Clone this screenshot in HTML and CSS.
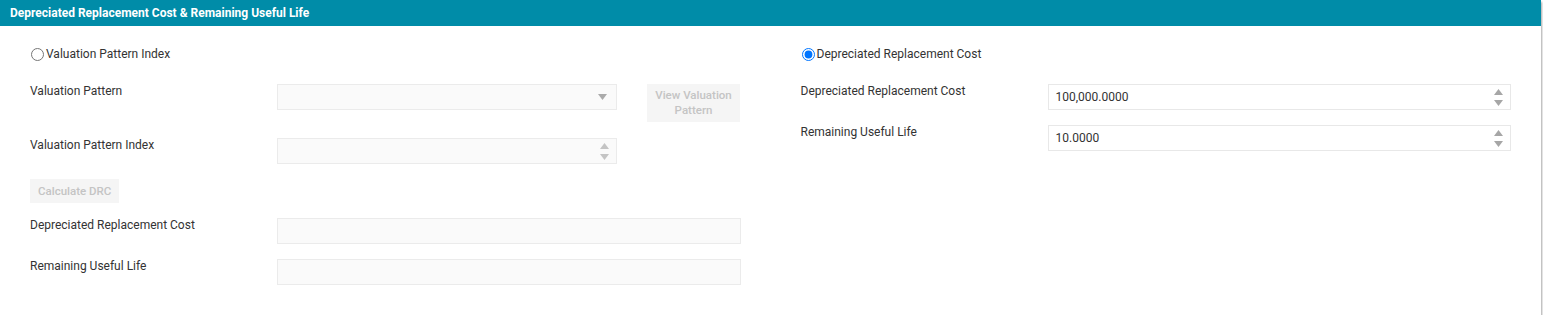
FILE: index.html
```html
<!DOCTYPE html>
<html lang="en">
<head>
	<meta charset="UTF-8">
	<title>Depreciated Replacement Cost</title>
	<link rel="stylesheet" href="styles.css">
</head>
<body>
	<div class="panel">
		<div class="panel-head">Depreciated Replacement Cost &amp; Remaining Useful Life</div>
		<div class="panel-body">
			<!-- 左侧：按估值模式计算 -->
			<div class="col">
				<label class="option"><input type="radio" name="mode"> Valuation Pattern Index</label>

				<div class="field field-tall">
					<span class="label">Valuation Pattern</span>
					<div class="controls">
						<div class="box disabled short">
							<span class="value"></span>
							<svg class="caret" width="9" height="6" viewBox="0 0 9 6"><path d="M0 0h9L4.5 6z"/></svg>
						</div>
						<a href="javascript:;" class="btn btn-tall">View Valuation<br>Pattern</a>
					</div>
				</div>

				<div class="field">
					<span class="label">Valuation Pattern Index</span>
					<div class="controls">
						<div class="box disabled short">
							<span class="value"></span>
							<span class="spin">
								<svg width="9" height="6" viewBox="0 0 9 6"><path d="M4.5 0L9 6H0z"/></svg>
								<svg width="9" height="6" viewBox="0 0 9 6"><path d="M0 0h9L4.5 6z"/></svg>
							</span>
						</div>
					</div>
				</div>

				<div class="action">
					<a href="javascript:;" class="btn">Calculate DRC</a>
				</div>

				<div class="field">
					<span class="label">Depreciated Replacement Cost</span>
					<div class="controls">
						<div class="box disabled"><span class="value"></span></div>
					</div>
				</div>

				<div class="field">
					<span class="label">Remaining Useful Life</span>
					<div class="controls">
						<div class="box disabled"><span class="value"></span></div>
					</div>
				</div>
			</div>

			<!-- 右侧：直接输入 -->
			<div class="col">
				<label class="option"><input type="radio" name="mode" checked> Depreciated Replacement Cost</label>

				<div class="field">
					<span class="label">Depreciated Replacement Cost</span>
					<div class="controls">
						<div class="box">
							<span class="value">100,000.0000</span>
							<span class="spin">
								<svg width="9" height="6" viewBox="0 0 9 6"><path d="M4.5 0L9 6H0z"/></svg>
								<svg width="9" height="6" viewBox="0 0 9 6"><path d="M0 0h9L4.5 6z"/></svg>
							</span>
						</div>
					</div>
				</div>

				<div class="field">
					<span class="label">Remaining Useful Life</span>
					<div class="controls">
						<div class="box">
							<span class="value">10.0000</span>
							<span class="spin">
								<svg width="9" height="6" viewBox="0 0 9 6"><path d="M4.5 0L9 6H0z"/></svg>
								<svg width="9" height="6" viewBox="0 0 9 6"><path d="M0 0h9L4.5 6z"/></svg>
							</span>
						</div>
					</div>
				</div>
			</div>
		</div>
	</div>
</body>
</html>
```

FILE: styles.css
```css
body {
	margin: 0;
	background: #fff;
	font-family: Roboto, "Liberation Sans", Arial, sans-serif;
	font-size: 12px;
	color: #333;
}
.panel {
	width: 1541px;
	background: #fff;
	box-shadow: 1px 2px 2px rgba(0,0,0,.35);
}
.panel-head {
	height: 26px;
	line-height: 26px;
	padding-left: 10px;
	background: #008ca8;
	color: #fff;
	font-weight: bold;
}
.panel-body {
	display: grid;
	grid-template-columns: 1fr 1fr;
	column-gap: 60px;
	padding: 20px 30px 30px;
}
.col {
	display: flex;
	flex-direction: column;
}
.option {
	display: flex;
	align-items: center;
	height: 16px;
	margin-bottom: 22px;
	gap: 2px;
}
.option input {
	margin: 0 0 0 1px;
	width: 13px;
	height: 13px;
}
.field {
	display: flex;
	margin-bottom: 15px;
}
.field-tall {
	margin-bottom: 16px;
}
.field:last-child {
	margin-bottom: 0;
}
.label {
	flex: 0 0 247px;
	line-height: 14px;
}
.controls {
	flex: 1;
	display: flex;
	gap: 30px;
}
.box {
	flex: 1;
	display: flex;
	align-items: center;
	height: 26px;
	box-sizing: border-box;
	border: 1px solid #e8e8e8;
	background: #fff;
	padding: 0 7px 0 7px;
}
.box.short {
	flex: 0 0 340px;
}
.box.disabled {
	background: #fafafa;
	border-color: #ebebeb;
}
.value {
	flex: 1;
	font-size: 12px;
	color: #333;
}
.caret {
	fill: #aaa;
	margin-right: 2px;
}
.spin {
	display: flex;
	flex-direction: column;
	gap: 5px;
}
.spin svg {
	display: block;
	fill: #a6a6a6;
}
.disabled .spin svg {
	fill: #c4c4c4;
}
.btn {
	display: inline-block;
	background: #f5f5f5;
	color: #c4c4c4;
	font-weight: 500;
	font-size: 11.5px;
	text-decoration: none;
	text-align: center;
	line-height: 24px;
	padding: 0 8px;
}
.btn-tall {
	width: 93px;
	box-sizing: border-box;
	height: 38px;
	line-height: 15px;
	padding: 4px 2px 0;
	flex: 0 0 93px;
}
.action {
	margin-bottom: 15px;
}
```
